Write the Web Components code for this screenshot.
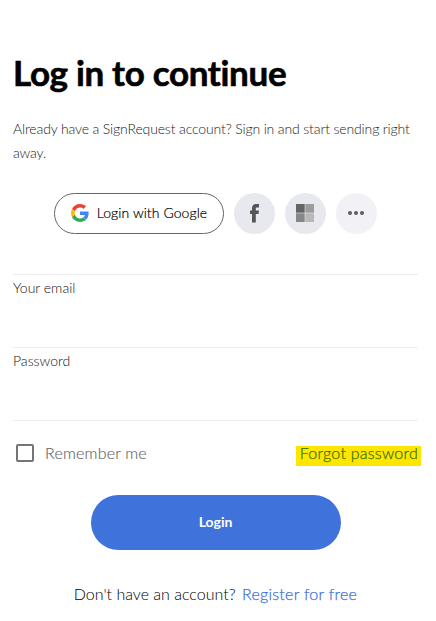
<!DOCTYPE html>
<html lang="en">
<head>
<meta charset="utf-8">
<title>Log in</title>
<style>
  body {
    margin: 0;
    background: #fff;
    font-family: Lato, "Liberation Sans", sans-serif;
    font-variant-ligatures: none;
  }
</style>
</head>
<body>

<login-page></login-page>

<script>
class SocialButton extends HTMLElement {
  constructor() {
    super();
    this.attachShadow({ mode: 'open' });
  }

  connectedCallback() {
    this.shadowRoot.innerHTML = `

      <style>

        :host {
          display: block;
          height: 41px;
        }

        button {
          box-sizing: border-box;
          display: flex;
          align-items: center;
          justify-content: center;
          width: 41px;
          height: 41px;
          margin: 0;
          padding: 0;
          border: 0;
          border-radius: 21px;
          background: #e8e9ef;
          color: #000;
          font: 300 14px/20px Lato, sans-serif;
          letter-spacing: 0.08px;
          -webkit-text-stroke: 0.2px #000;
        }

        :host([wide]) button {
          width: 170px;
          gap: 8px;
          padding-bottom: 2px;
          border: 1px solid #666;
          background: #fff;
        }

        :host([light]) button {
          background: #f2f1f6;
        }

        ::slotted(svg) {
          display: block;
        }

      </style>

      <button type="button"><slot></slot></button>

    `;
  }
}

class FormField extends HTMLElement {
  constructor() {
    super();
    this.attachShadow({ mode: 'open' });
  }

  connectedCallback() {
    const type = this.getAttribute('type') || 'text';

    this.shadowRoot.innerHTML = `

      <style>

        :host {
          display: block;
          box-sizing: border-box;
          height: 73px;
          border-bottom: 1px solid #eee;
        }

        label {
          display: block;
          padding-top: 3px;
          color: #111;
          font-size: 14px;
          font-weight: 300;
          line-height: 20px;
        }

        input {
          display: block;
          box-sizing: border-box;
          width: 100%;
          height: 40px;
          margin: 4px 0 0;
          padding: 0;
          border: 0;
          outline: 0;
          background: none;
          font: inherit;
        }

      </style>

      <label for="campo"><slot></slot></label>
      <input id="campo" type="${type}" />

    `;
  }
}

class CheckOption extends HTMLElement {
  constructor() {
    super();
    this.attachShadow({ mode: 'open' });
  }

  connectedCallback() {
    this.shadowRoot.innerHTML = `

      <style>

        :host {
          display: block;
        }

        label {
          display: flex;
          align-items: center;
          gap: 11px;
          padding-left: 3px;
          color: #666;
          font-size: 16px;
          font-weight: 300;
          letter-spacing: 0.2px;
          line-height: 24px;
          -webkit-text-stroke: 0.15px #666;
        }

        input {
          appearance: none;
          box-sizing: border-box;
          width: 18px;
          height: 18px;
          margin: 0;
          border: 2px solid #757575;
          border-radius: 2px;
          background: #fff;
        }

      </style>

      <label><input type="checkbox" /><slot></slot></label>

    `;
  }
}

class LoginPage extends HTMLElement {
  constructor() {
    super();
    this.attachShadow({ mode: 'open' });
  }

  connectedCallback() {
    this.shadowRoot.innerHTML = `

      <style>

        :host {
          display: block;
          box-sizing: border-box;
          width: 436px;
          height: 621px;
          padding: 50px 18px 0 13px;
          overflow: hidden;
        }

        h1 {
          margin: -2px 0 0;
          color: #000;
          font-size: 35px;
          font-weight: 700;
          letter-spacing: -0.32px;
          line-height: 48px;
          -webkit-text-stroke: 0.6px #000;
        }

        .intro {
          margin: 21px -10px 0 0;
          color: #222;
          font-size: 14px;
          font-weight: 300;
          letter-spacing: -0.14px;
          line-height: 24px;
        }

        .social {
          display: flex;
          justify-content: center;
          gap: 10px;
          margin-top: 28px;
        }

        .fields {
          margin-top: 40px;
          border-top: 1px solid #eee;
        }

        .options {
          display: flex;
          align-items: flex-start;
          justify-content: space-between;
          margin-top: 20px;
        }

        a {
          color: #3f72db;
          text-decoration: none;
        }

        .forgot {
          height: 20px;
          margin: 5px -3px 0 0;
          padding: 0 3px 0 4px;
          background: #ffe600;
          color: #3c7400;
          font-size: 16px;
          font-weight: 300;
          letter-spacing: 0.25px;
          line-height: 14px;
          -webkit-text-stroke: 0.25px #3c7400;
        }

        .submit {
          display: block;
          width: 250px;
          height: 55px;
          margin: 29px auto 0;
          padding: 0 0 2px;
          border: 0;
          border-radius: 28px;
          background: #3f72db;
          color: #fff;
          font: 700 14px/20px Lato, sans-serif;
        }

        .register {
          margin: 32px 0 0;
          color: #000;
          font-size: 16px;
          font-weight: 300;
          line-height: 24px;
          text-align: center;
        }

        .register a {
          margin-left: 2px;
          letter-spacing: 0.28px;
          -webkit-text-stroke: 0.25px #3f72db;
        }

      </style>

      <h1>Log in to continue</h1>
      <p class="intro">Already have a SignRequest account? Sign in and start sending right away.</p>

      <div class="social">
        <social-button wide>
          <svg width="18" height="18" viewBox="0 0 48 48">
            <path fill="#ea4335" d="M24 9.5c3.54 0 6.71 1.22 9.21 3.6l6.85-6.85C35.9 2.38 30.47 0 24 0 14.62 0 6.51 5.38 2.56 13.22l7.98 6.19C12.43 13.72 17.74 9.5 24 9.5z"/>
            <path fill="#4285f4" d="M46.98 24.55c0-1.57-.15-3.09-.38-4.55H24v9.02h12.94c-.58 2.96-2.26 5.48-4.78 7.18l7.73 6c4.51-4.18 7.09-10.36 7.09-17.65z"/>
            <path fill="#fbbc05" d="M10.53 28.59A14.5 14.5 0 0 1 9.77 24c0-1.6.27-3.14.76-4.59l-7.98-6.19A23.9 23.9 0 0 0 0 24c0 3.88.92 7.54 2.56 10.78z"/>
            <path fill="#34a853" d="M24 48c6.48 0 11.93-2.13 15.89-5.81l-7.73-6C30.01 37.64 27.24 38.49 24 38.49c-6.26 0-11.57-4.22-13.47-9.91l-7.98 6.19C6.51 42.62 14.62 48 24 48z"/>
          </svg>
          <span>Login with Google</span>
        </social-button>
        <social-button>
          <svg width="10" height="20" viewBox="0 0 10 20">
            <path fill="#555" d="M2 18.500V10H0V6.500H2V4.500C2 1.500 3.500 0 6.200 0H9V3.400H7.200C6.200 3.400 5.800 3.800 5.800 4.700V6.500H9L8.500 10H5.800V18.500Z"/>
          </svg>
        </social-button>
        <social-button>
          <svg width="19" height="19" viewBox="0 0 19 19">
            <path fill="#646464" d="M0 0h8.700v8.700H0z"/>
            <path fill="#9c9c9c" d="M9.300 0H18v8.700H9.300z"/>
            <path fill="#868686" d="M0 9.300h8.700V18H0z"/>
            <path fill="#b8b8b8" d="M9.300 9.300H18V18H9.300z"/>
          </svg>
        </social-button>
        <social-button light>
          <svg width="19" height="5" viewBox="0 0 19 5" fill="#5c5c60">
            <circle cx="3" cy="2" r="2"/>
            <circle cx="9" cy="2" r="2"/>
            <circle cx="15" cy="2" r="2"/>
          </svg>
        </social-button>
      </div>

      <div class="fields">
        <form-field type="email">Your email</form-field>
        <form-field type="password">Password</form-field>
      </div>

      <div class="options">
        <check-option>Remember me</check-option>
        <a class="forgot">Forgot password</a>
      </div>

      <button class="submit" type="submit">Login</button>

      <p class="register">Don't have an account? <a>Register for free</a></p>

    `;
  }
}

customElements.define('social-button', SocialButton);
customElements.define('form-field', FormField);
customElements.define('check-option', CheckOption);
customElements.define('login-page', LoginPage);
</script>
</body>
</html>
